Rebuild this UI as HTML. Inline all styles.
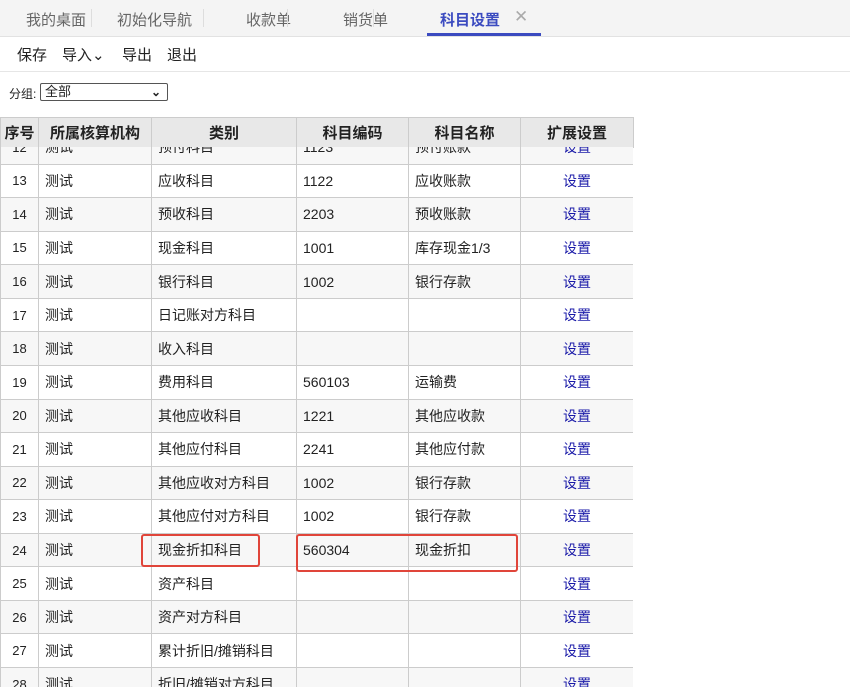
<!DOCTYPE html>
<html><head><meta charset="utf-8"><style>
*{margin:0;padding:0;box-sizing:border-box}
body{width:850px;height:687px;overflow:hidden;background:#fff;font-family:"Liberation Sans","Noto Sans CJK SC",sans-serif;font-size:14px;color:#222;position:relative}
.tabs{position:absolute;left:0;top:0;width:850px;height:37px;background:#f4f4f4;border-bottom:1px solid #e2e2e2}
.tab{position:absolute;top:9px;font-size:15px;color:#666}
.sep{position:absolute;top:9px;width:1px;height:18px;background:#ddd}
.tool{position:absolute;top:44px;font-size:15px;color:#222}
.line{position:absolute;left:0;width:850px;height:1px;background:#e6e6e6}
.body{position:absolute;left:0;top:147px;width:633px;height:540px;overflow:hidden}
table{border-collapse:collapse;table-layout:fixed;position:absolute;left:0}
td,th{border:1px solid #ccc;height:33.57px;padding:0 6px;font-size:14px;white-space:nowrap;font-weight:normal}
th{background:#e8e8e8;font-weight:bold;height:30px;font-size:15px}
tr:nth-child(odd) td{background:#f7f7f7}
td.n{font-size:13px;text-align:center;padding:0}
td.s{color:#1a1aa8;text-align:center}
.red{position:absolute;border:2px solid #e0453a;border-radius:3px}
</style></head><body>
<div class="tabs">
<span class="tab" style="left:26px">我的桌面</span><span class="sep" style="left:91px"></span>
<span class="tab" style="left:117px">初始化导航</span><span class="sep" style="left:203px"></span>
<span class="tab" style="left:246px">收款单</span><span class="sep" style="left:287px"></span>
<span class="tab" style="left:343px">销货单</span><span class="sep" style="left:373px"></span>
<span class="tab" style="left:440px;color:#3b4bc0;font-weight:bold">科目设置</span>
<span class="tab" style="left:514px;color:#aaa;font-size:17px;top:7px">✕</span>
<div style="position:absolute;left:427px;top:33px;width:114px;height:3px;background:#3b4bc0"></div>
</div>
<span class="tool" style="left:17px">保存</span>
<span class="tool" style="left:62px">导入⌄</span>
<span class="tool" style="left:122px">导出</span>
<span class="tool" style="left:167px">退出</span>
<div class="line" style="top:71px"></div>
<span style="position:absolute;left:9px;top:85px;font-size:12px">分组:</span>
<div style="position:absolute;left:40px;top:83px;width:128px;height:18px;border:1px solid #555;border-radius:2px;font-size:13px;padding-left:4px;line-height:16px">全部<span style="position:absolute;right:6px;top:0;font-size:12px;font-weight:bold">&#x2304;</span></div>
<table style="top:117px;width:633px">
<colgroup><col style="width:38px"><col style="width:113px"><col style="width:145px"><col style="width:112px"><col style="width:112px"><col style="width:113px"></colgroup>
<tr><th style="padding:0">序号</th><th>所属核算机构</th><th>类别</th><th>科目编码</th><th>科目名称</th><th>扩展设置</th></tr>
</table>
<div class="body">
<table style="top:-17px;width:633px">
<colgroup><col style="width:38px"><col style="width:113px"><col style="width:145px"><col style="width:112px"><col style="width:112px"><col style="width:113px"></colgroup>
<tr><td class="n">12</td><td>测试</td><td>预付科目</td><td>1123</td><td>预付账款</td><td class="s">设置</td></tr>
<tr><td class="n">13</td><td>测试</td><td>应收科目</td><td>1122</td><td>应收账款</td><td class="s">设置</td></tr>
<tr><td class="n">14</td><td>测试</td><td>预收科目</td><td>2203</td><td>预收账款</td><td class="s">设置</td></tr>
<tr><td class="n">15</td><td>测试</td><td>现金科目</td><td>1001</td><td>库存现金1/3</td><td class="s">设置</td></tr>
<tr><td class="n">16</td><td>测试</td><td>银行科目</td><td>1002</td><td>银行存款</td><td class="s">设置</td></tr>
<tr><td class="n">17</td><td>测试</td><td>日记账对方科目</td><td></td><td></td><td class="s">设置</td></tr>
<tr><td class="n">18</td><td>测试</td><td>收入科目</td><td></td><td></td><td class="s">设置</td></tr>
<tr><td class="n">19</td><td>测试</td><td>费用科目</td><td>560103</td><td>运输费</td><td class="s">设置</td></tr>
<tr><td class="n">20</td><td>测试</td><td>其他应收科目</td><td>1221</td><td>其他应收款</td><td class="s">设置</td></tr>
<tr><td class="n">21</td><td>测试</td><td>其他应付科目</td><td>2241</td><td>其他应付款</td><td class="s">设置</td></tr>
<tr><td class="n">22</td><td>测试</td><td>其他应收对方科目</td><td>1002</td><td>银行存款</td><td class="s">设置</td></tr>
<tr><td class="n">23</td><td>测试</td><td>其他应付对方科目</td><td>1002</td><td>银行存款</td><td class="s">设置</td></tr>
<tr><td class="n">24</td><td>测试</td><td>现金折扣科目</td><td>560304</td><td>现金折扣</td><td class="s">设置</td></tr>
<tr><td class="n">25</td><td>测试</td><td>资产科目</td><td></td><td></td><td class="s">设置</td></tr>
<tr><td class="n">26</td><td>测试</td><td>资产对方科目</td><td></td><td></td><td class="s">设置</td></tr>
<tr><td class="n">27</td><td>测试</td><td>累计折旧/摊销科目</td><td></td><td></td><td class="s">设置</td></tr>
<tr><td class="n">28</td><td>测试</td><td>折旧/摊销对方科目</td><td></td><td></td><td class="s">设置</td></tr>
</table>
</div>
<div class="red" style="left:141px;top:534px;width:119px;height:33px"></div>
<div class="red" style="left:296px;top:534px;width:222px;height:38px"></div>
</body></html>
